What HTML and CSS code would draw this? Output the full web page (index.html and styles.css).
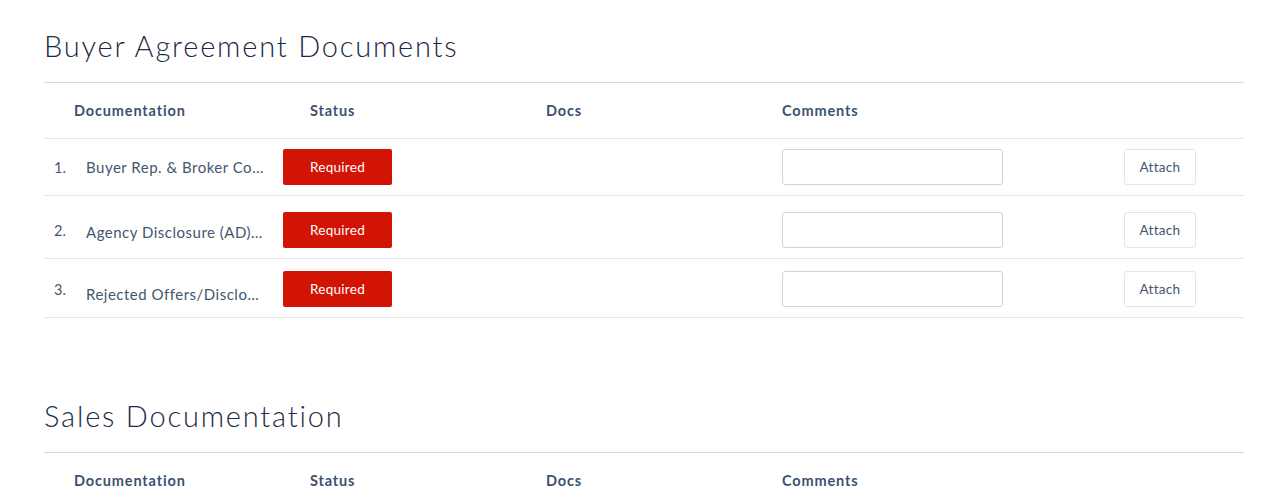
FILE: index.html
```html
<!DOCTYPE html>
<html>
<head>
<meta charset="utf-8">
<link rel="stylesheet" href="styles.css">
</head>
<body>
<div class="page">
  <section class="section">
    <h2 class="section-title">Buyer Agreement Documents</h2>
    <div class="table">
      <div class="thead">
        <div class="th">Documentation</div>
        <div class="th">Status</div>
        <div class="th">Docs</div>
        <div class="th">Comments</div>
      </div>
      <div class="row row-1">
        <div class="num">1.</div>
        <div class="name">Buyer Rep. &amp; Broker Compensation Agreement</div>
        <div class="status"><span class="badge">Required</span></div>
        <div class="comment"><input class="input" type="text"></div>
        <div class="action"><button class="attach">Attach</button></div>
      </div>
      <div class="row row-2">
        <div class="num">2.</div>
        <div class="name">Agency Disclosure (AD) Form</div>
        <div class="status"><span class="badge">Required</span></div>
        <div class="comment"><input class="input" type="text"></div>
        <div class="action"><button class="attach">Attach</button></div>
      </div>
      <div class="row row-3">
        <div class="num">3.</div>
        <div class="name">Rejected Offers/Disclosures</div>
        <div class="status"><span class="badge">Required</span></div>
        <div class="comment"><input class="input" type="text"></div>
        <div class="action"><button class="attach">Attach</button></div>
      </div>
    </div>
  </section>
  <section class="section section-2">
    <h2 class="section-title">Sales Documentation</h2>
    <div class="table">
      <div class="thead">
        <div class="th">Documentation</div>
        <div class="th">Status</div>
        <div class="th">Docs</div>
        <div class="th">Comments</div>
      </div>
    </div>
  </section>
</div>
</body>
</html>
```
FILE: styles.css
```css
* { box-sizing: border-box; }
html, body { margin: 0; padding: 0; background: #fff; }
body {
  font-family: "Lato", "Noto Sans", sans-serif;
  color: #44566f;
  overflow: hidden;
  height: 496px;
}
.page {
  width: 1200px;
  margin-left: 44px;
  padding-top: 26px;
}
.section-title {
  margin: 0;
  font-weight: 300;
  font-size: 29px;
  line-height: 40px;
  color: #1b2b45;
  letter-spacing: 1.8px;
  padding-bottom: 16px;
  border-bottom: 1px solid #d5d9de;
}
.thead {
  display: grid;
  grid-template-columns: 236px 236px 236px 236px;
  padding-left: 30px;
  height: 56px;
  align-items: center;
  border-bottom: 1px solid #e2e6ea;
}
.th {
  font-weight: 700;
  font-size: 14.5px;
  letter-spacing: 0.85px;
  color: #3c5170;
}
.row {
  display: grid;
  grid-template-columns: 32px 197px 499px 342px 1fr;
  padding-left: 10px;
  align-items: center;
  border-bottom: 1px solid #e2e6ea;
  padding-bottom: 10px;
}
.row-1 { padding-top: 10px; }
.row-2 { padding-top: 16px; }
.row-3 { padding-top: 12px; }
.num {
  font-size: 14.5px;
  color: #44566f;
}
.name {
  font-size: 15px;
  letter-spacing: 0.5px;
  color: #44566f;
  white-space: nowrap;
  overflow: hidden;
  text-overflow: ellipsis;
  width: 178px;
}
.row-2 .name { padding-top: 4px; }
.row-3 .name { padding-top: 10px; }
.badge {
  display: flex;
  align-items: center;
  justify-content: center;
  width: 109px;
  height: 36px;
  background: #d21404;
  border-radius: 2px;
  color: #fff;
  font-size: 13.5px;
  letter-spacing: 0.3px;
}
.input {
  display: block;
  width: 221px;
  height: 36px;
  border: 1px solid #cfd3d8;
  border-radius: 3px;
  background: #fff;
  margin: 0;
  padding: 0 8px;
}
.attach {
  display: block;
  width: 72px;
  height: 36px;
  border: 1px solid #e1e4e8;
  border-radius: 3px;
  background: #fff;
  color: #44566f;
  font-family: inherit;
  font-size: 13.5px;
  letter-spacing: 0.3px;
  padding: 0;
}
.section-2 {
  margin-top: 78px;
}
```
